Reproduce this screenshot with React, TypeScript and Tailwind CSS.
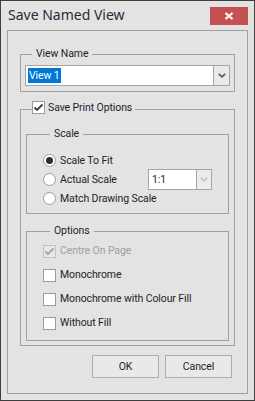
import React from "react";

function Check({ checked, disabled }: { checked?: boolean; disabled?: boolean }) {
  return (
    <span
      className={
        disabled
          ? "w-[13px] h-[13px] shrink-0 border border-[#c2c2c2] bg-[#e8e8e8] flex items-center justify-center"
          : "w-[13px] h-[13px] shrink-0 border border-[#9b9b9b] bg-white flex items-center justify-center"
      }
    >
      {checked && (
        <svg width="11" height="11" viewBox="0 0 11 11">
          <path
            d="M1.5 5.5 L4 8 L9.5 2.5"
            stroke={disabled ? "#a3a3a3" : "#4b3347"}
            strokeWidth="1.8"
            fill="none"
          />
        </svg>
      )}
    </span>
  );
}

function Radio({ checked }: { checked?: boolean }) {
  return (
    <span className="w-[13px] h-[13px] shrink-0 rounded-full border border-[#9b9b9b] bg-white flex items-center justify-center">
      {checked && <span className="w-[7px] h-[7px] rounded-full bg-[#2d2d2d]" />}
    </span>
  );
}

function Chevron({ color }: { color: string }) {
  return (
    <svg width="8" height="5" viewBox="0 0 8 5">
      <path d="M0.8 0.8 L4 3.8 L7.2 0.8" stroke={color} strokeWidth="1.7" fill="none" />
    </svg>
  );
}

export default function App() {
  return (
    <div className="w-[255px] h-[401px] bg-[#e3e3e3] border border-[#3f3f3f] flex flex-col font-['Roboto',sans-serif] text-[#1e1e2a]">
      {/* Title bar */}
      <div className="h-[29px] shrink-0 flex items-start justify-between pl-[7px] pr-[6px]">
        <span className="font-['Noto_Sans',sans-serif] text-[14px] leading-[18px] mt-[5px] text-[#2a2a38]">Save Named View</span>
        <div className="mt-[6px] w-[38px] h-[18px] bg-[#c75050] flex items-center justify-center">
          <svg width="10" height="8" viewBox="0 0 10 8">
            <path d="M1.5 1 L8.5 7 M8.5 1 L1.5 7" stroke="#ffffff" strokeWidth="2.2" fill="none" />
          </svg>
        </div>
      </div>

      {/* Panel */}
      <div className="mx-[6px] mb-[6px] flex-1 border border-[#a0a0a0] px-[12px] pt-[16px] flex flex-col text-[10.5px] tracking-[-0.1px]">
        {/* View Name */}
        <fieldset className="border border-[#a0a0a0] px-[4px] pt-[4px] pb-[5px]">
          <legend className="ml-[7px] px-[4px] leading-[14px]">View Name</legend>
          <div className="flex h-[21px] border border-[#a6a6a6] bg-white">
            <div className="flex-1 flex items-center pl-[2px]">
              <span className="bg-[#0078d7] text-white leading-[14px] px-[1px] h-[15px] flex items-center">View 1</span>
            </div>
            <div className="w-[16px] border-l border-[#a6a6a6] bg-[#e9e9e9] flex items-center justify-center">
              <Chevron color="#6d5366" />
            </div>
          </div>
        </fieldset>

        {/* Save Print Options */}
        <fieldset className="mt-[9px] border border-[#a0a0a0] px-[5px] pt-[10px] pb-[4px]">
          <legend className="ml-[6px] pr-[3px] h-[16px] flex items-start">
            <Check checked />
            <span className="ml-[3px] leading-[13px]">Save Print Options</span>
          </legend>

          {/* Scale */}
          <fieldset className="border border-[#a0a0a0] pl-[16px] pt-[10px] pb-[5px]">
            <legend className="ml-[7px] px-[4px] leading-[14px]">Scale</legend>
            <div className="h-[19px] flex items-center">
              <Radio checked />
              <span className="ml-[4px]">Scale To Fit</span>
            </div>
            <div className="h-[19px] flex items-center">
              <Radio />
              <span className="ml-[4px] w-[88px]">Actual Scale</span>
              <div className="flex h-[21px] w-[64px] border border-[#a6a6a6] bg-white">
                <div className="flex-1 flex items-center pl-[3px]">1:1</div>
                <div className="w-[15px] border-l border-[#a6a6a6] bg-[#ececec] flex items-center justify-center">
                  <Chevron color="#c4c4c4" />
                </div>
              </div>
            </div>
            <div className="h-[19px] flex items-center">
              <Radio />
              <span className="ml-[4px]">Match Drawing Scale</span>
            </div>
          </fieldset>

          {/* Options */}
          <fieldset className="mt-[10px] border border-[#a0a0a0] pl-[16px] pt-[1px] pb-[5px]">
            <legend className="ml-[7px] px-[4px] leading-[14px]">Options</legend>
            <div className="h-[24px] flex items-center">
              <Check checked disabled />
              <span className="ml-[4px] text-[#a0a0a0]">Centre On Page</span>
            </div>
            <div className="h-[24px] flex items-center">
              <Check />
              <span className="ml-[4px]">Monochrome</span>
            </div>
            <div className="h-[24px] flex items-center">
              <Check />
              <span className="ml-[4px]">Monochrome with Colour Fill</span>
            </div>
            <div className="h-[24px] flex items-center">
              <Check />
              <span className="ml-[4px]">Without Fill</span>
            </div>
          </fieldset>
        </fieldset>

        {/* Buttons */}
        <div className="mt-[9px] mr-[3px] flex justify-end gap-[6px]">
          <button className="w-[67px] h-[23px] border border-[#adadad] bg-[#e9e9e9] flex items-center justify-center">OK</button>
          <button className="w-[67px] h-[23px] border border-[#adadad] bg-[#e9e9e9] flex items-center justify-center">Cancel</button>
        </div>
      </div>
    </div>
  );
}
